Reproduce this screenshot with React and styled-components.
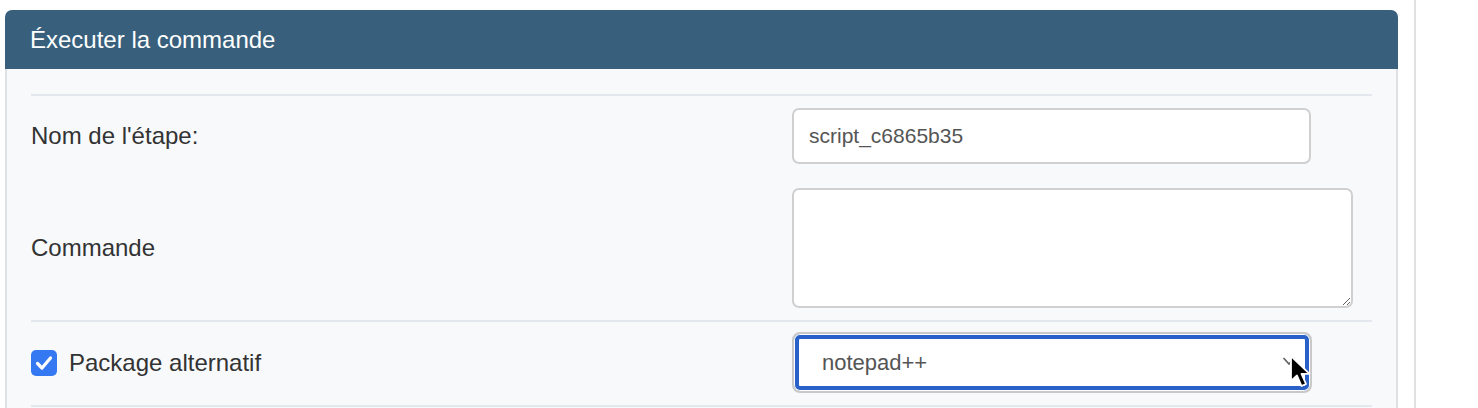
import React from "react";
import styled, { createGlobalStyle } from "styled-components";

const Global = createGlobalStyle`
  html, body { margin: 0; padding: 0; background: #ffffff; }
  body { font-family: "Liberation Sans", Arial, Helvetica, sans-serif; }
  * { box-sizing: border-box; }
`;

const Layout = styled.div`
  display: flex;
  height: 408px;
  overflow: hidden;
`;

const Column = styled.div`
  width: 1398px;
  padding: 10px 0 0 5px;
  flex: none;
`;

const Sidebar = styled.div`
  margin-left: 16px;
  flex: 1;
  border-left: 2px solid #e1e1e1;
`;

const Panel = styled.section`
  display: flex;
  flex-direction: column;
`;

const PanelHeader = styled.header`
  height: 59px;
  display: flex;
  align-items: center;
  padding-left: 25px;
  background: #385f7c;
  border-radius: 7px 7px 0 0;
  color: #ffffff;
  font-size: 24px;
`;

const PanelBody = styled.div`
  background: #f7f9fb;
  border-left: 2px solid #dfe1e3;
  border-right: 2px solid #dfe1e3;
  padding: 25px 24px 40px;
`;

const Group = styled.div`
  border-top: 2px solid #e3e8ee;
  padding: ${(p) => p.$pad || "12px 0 12px"};
  display: flex;
  flex-direction: column;
  gap: 24px;
`;

const Row = styled.div`
  display: grid;
  grid-template-columns: 761px 1fr;
  align-items: center;
`;

const Label = styled.label`
  display: flex;
  align-items: center;
  gap: 12px;
  font-size: 24px;
  color: #333333;
`;

const TextInput = styled.input`
  width: 519px;
  height: 56px;
  border: 2px solid #d0d0d0;
  border-radius: 7px;
  background: #ffffff;
  padding: 0 15px;
  font-family: inherit;
  font-size: 21px;
  color: #555555;
  outline: none;
`;

const TextArea = styled.textarea`
  display: block;
  width: 561px;
  height: 120px;
  border: 2px solid #d0d0d0;
  border-radius: 7px;
  background: #ffffff;
  font-family: inherit;
  font-size: 21px;
  outline: none;
`;

const SelectBox = styled.div`
  position: relative;
  width: 520px;
  height: 61px;
  border: 2px solid #c9c9c9;
  border-radius: 8px;
  background: #ffffff;
  box-shadow: inset 0 0 0 1px #ffffff, inset 0 0 0 5px #2a61c8;
  display: flex;
  align-items: center;
  padding-left: 28px;
  font-size: 22px;
  color: #555555;
`;

const Chevron = styled.svg`
  position: absolute;
  right: 14px;
  top: 22px;
`;

const Pointer = styled.svg`
  position: absolute;
  left: 495px;
  top: 20px;
`;

const CheckBox = styled.span`
  width: 26px;
  height: 26px;
  border-radius: 5px;
  background: #3478f2;
  display: inline-flex;
  align-items: center;
  justify-content: center;
  flex: none;
`;

export default function App() {
  return (
    <>
      <Global />
      <Layout>
        <Column>
          <Panel>
            <PanelHeader>Éxecuter la commande</PanelHeader>
            <PanelBody>
              <Group>
                <Row>
                  <Label>Nom de l'étape:</Label>
                  <TextInput defaultValue="script_c6865b35" />
                </Row>
                <Row>
                  <Label>Commande</Label>
                  <TextArea />
                </Row>
              </Group>
              <Group $pad="10px 0 12px">
                <Row>
                  <Label>
                    <CheckBox>
                      <svg width="18" height="16" viewBox="0 0 18 16">
                        <path
                          d="M2.5 8.5 L7 13 L15.5 3"
                          fill="none"
                          stroke="#ffffff"
                          strokeWidth="3.2"
                          strokeLinecap="round"
                          strokeLinejoin="round"
                        />
                      </svg>
                    </CheckBox>
                    Package alternatif
                  </Label>
                  <SelectBox>
                    notepad++
                    <Chevron width="14" height="10" viewBox="0 0 14 10">
                      <path d="M1.5 2 L7 8 L12.5 2" fill="none" stroke="#666" strokeWidth="1.8" />
                    </Chevron>
                    <Pointer width="24" height="36" viewBox="0 0 24 36">
                      <path
                        d="M2 2 L2 27 L8 21.5 L12.5 32 L17 30 L12.5 19.8 L20.5 19.8 Z"
                        fill="#000000"
                        stroke="#ffffff"
                        strokeWidth="1.8"
                        strokeLinejoin="round"
                      />
                    </Pointer>
                  </SelectBox>
                </Row>
              </Group>
              <Group $pad="0" />
            </PanelBody>
          </Panel>
        </Column>
        <Sidebar />
      </Layout>
    </>
  );
}
